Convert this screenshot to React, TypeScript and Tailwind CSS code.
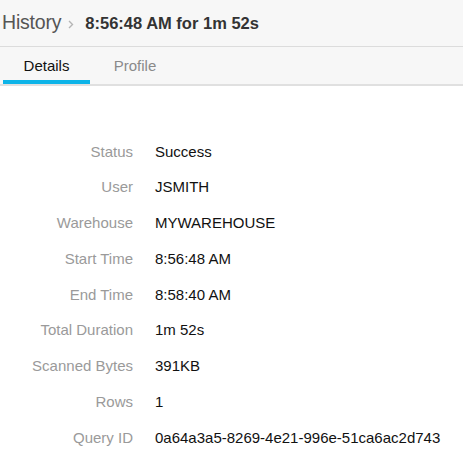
import React from "react";

const rows: [string, string][] = [
  ["Status", "Success"],
  ["User", "JSMITH"],
  ["Warehouse", "MYWAREHOUSE"],
  ["Start Time", "8:56:48 AM"],
  ["End Time", "8:58:40 AM"],
  ["Total Duration", "1m 52s"],
  ["Scanned Bytes", "391KB"],
  ["Rows", "1"],
  ["Query ID", "0a64a3a5-8269-4e21-996e-51ca6ac2d743"],
];

export default function App() {
  return (
    <div
      className="w-[463px] h-[455px] bg-white overflow-hidden"
      style={{ fontFamily: '"Liberation Sans", Arial, sans-serif' }}
    >
      <div className="h-[47px] bg-[#f7f7f7] border-b border-[#dcdcdc] flex items-center pl-[2px]">
        <span className="text-[19.5px] text-[#555] tracking-[-0.2px]">History</span>
        <svg width="6" height="9" viewBox="0 0 6 9" className="ml-[7px] mr-[11px] mt-[2px]">
          <path d="M1 1 L4.5 4.5 L1 8" fill="none" stroke="#b5b5b5" strokeWidth="1.4" />
        </svg>
        <span className="text-[16.5px] font-bold text-[#333]">8:56:48 AM for 1m 52s</span>
      </div>
      <div className="h-[39px] bg-[#f7f7f7] border-b-2 border-[#e0e0e0] flex items-stretch pl-[3px]">
        <div className="relative w-[87px] flex items-center justify-center text-[15px] text-[#111] pt-[1px]">
          Details
          <div className="absolute left-0 right-0 bottom-0 h-[4px] bg-[#0db4e8]" />
        </div>
        <div className="w-[93px] flex items-center justify-center text-[15px] text-[#8a8a8a] pt-[1px] pr-[3px]">
          Profile
        </div>
      </div>
      <div className="pt-[48px] flex flex-col">
        {rows.map(([k, v]) => (
          <div key={k} className="h-[35.75px] flex items-center text-[15px]">
            <div className="w-[133px] text-right text-[#9a9a9a] whitespace-nowrap">{k}</div>
            <div className="pl-[22px] text-[#111] whitespace-nowrap">{v}</div>
          </div>
        ))}
      </div>
    </div>
  );
}
